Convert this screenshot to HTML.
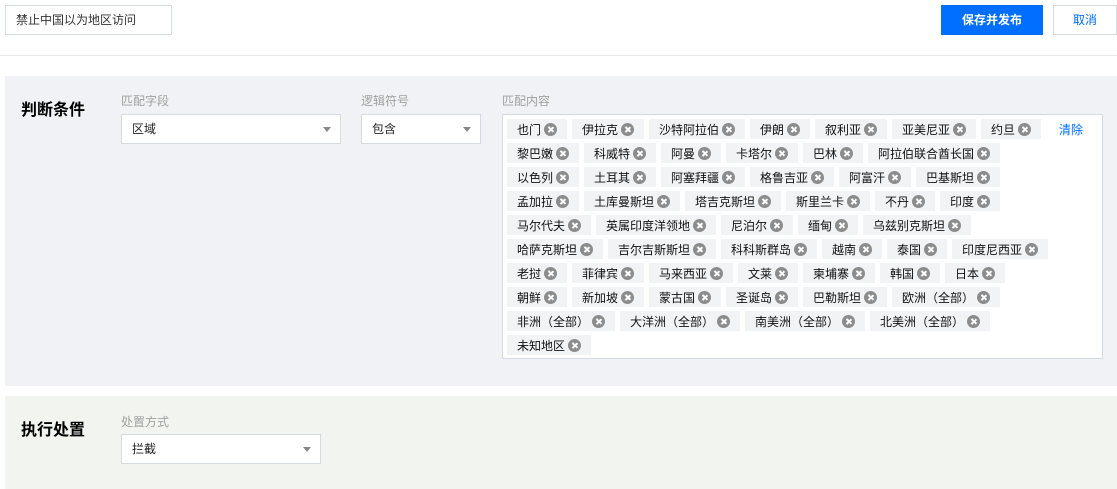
<!DOCTYPE html>
<html><head><meta charset="utf-8"><style>
*{box-sizing:border-box;margin:0;padding:0}
body{width:1117px;height:489px;background:#fff;font-family:"Liberation Sans","Noto Sans CJK SC",sans-serif;font-size:12px;color:#222;position:relative;overflow:hidden}
.abs{position:absolute}
.inp{left:5px;top:5px;width:167px;height:30px;border:1px solid #d9dde4;padding-left:10px;line-height:28px;color:#333}
.btn{top:5px;height:30px;line-height:30px;text-align:center}
.line{left:0;top:55px;width:1117px;height:1px;background:#e3e6eb}
.s1{left:5px;top:76px;width:1112px;height:310px;background:#f0f2f6}
.s2{left:5px;top:396px;width:1112px;height:93px;background:#f2f5ef}
.title{font-size:16px;font-weight:bold;color:#000}
.lbl{color:#a0a0a0;font-size:12px}
.sel{background:#fff;border:1px solid #d5d9e0;height:30px;line-height:28px;padding-left:10px;color:#222}
.sel:after{content:"";position:absolute;right:9px;top:12px;border-left:4px solid transparent;border-right:4px solid transparent;border-top:5px solid #888}
.box{left:502px;top:114px;width:601px;height:245px;background:#fff;border:1px solid #d5d9e0}
.rows{position:absolute;left:4px;top:4px}
.row{height:24px;display:flex}
.tag{height:20px;background:#f2f3f5;margin-right:5px;padding-left:10px;display:flex;align-items:center;white-space:nowrap;color:#111}
.x{width:13px;height:13px;border-radius:50%;background:#8c8c8c;margin-left:3px;position:relative;flex:none}
.x:before,.x:after{content:"";position:absolute;left:6px;top:3px;width:1.6px;height:7px;background:#fff;transform:rotate(45deg)}
.x:after{transform:rotate(-45deg)}
</style></head><body>
<div class="abs inp">禁止中国以为地区访问</div>
<div class="abs btn" style="left:941px;width:102px;background:#006eff;color:#fff;font-weight:bold">保存并发布</div>
<div class="abs btn" style="left:1053px;width:64px;border:1px solid #d5d9e0;color:#006eff;line-height:28px">取消</div>
<div class="abs line"></div>
<div class="abs s1"></div>
<div class="abs s2"></div>
<div class="abs title" style="left:21px;top:96px">判断条件</div>
<div class="abs lbl" style="left:121px;top:92px">匹配字段</div>
<div class="abs lbl" style="left:361px;top:92px">逻辑符号</div>
<div class="abs lbl" style="left:502px;top:92px">匹配内容</div>
<div class="abs sel" style="left:121px;top:114px;width:220px">区域</div>
<div class="abs sel" style="left:361px;top:114px;width:120px">包含</div>
<div class="abs box">
<div class="rows" id="r"></div>
<div class="abs" style="left:556px;top:6px;color:#006eff">清除</div>
</div>
<div class="abs title" style="left:21px;top:416px">执行处置</div>
<div class="abs lbl" style="left:121px;top:413px">处置方式</div>
<div class="abs sel" style="left:121px;top:434px;width:200px">拦截</div>
<script>
var rows=[["也门","伊拉克","沙特阿拉伯","伊朗","叙利亚","亚美尼亚","约旦"],
["黎巴嫩","科威特","阿曼","卡塔尔","巴林","阿拉伯联合酋长国"],
["以色列","土耳其","阿塞拜疆","格鲁吉亚","阿富汗","巴基斯坦"],
["孟加拉","土库曼斯坦","塔吉克斯坦","斯里兰卡","不丹","印度"],
["马尔代夫","英属印度洋领地","尼泊尔","缅甸","乌兹别克斯坦"],
["哈萨克斯坦","吉尔吉斯斯坦","科科斯群岛","越南","泰国","印度尼西亚"],
["老挝","菲律宾","马来西亚","文莱","柬埔寨","韩国","日本"],
["朝鲜","新加坡","蒙古国","圣诞岛","巴勒斯坦","欧洲（全部）"],
["非洲（全部）","大洋洲（全部）","南美洲（全部）","北美洲（全部）"],
["未知地区"]];
var h="";rows.forEach(function(r){h+='<div class="row">';r.forEach(function(t){var w=12*t.length+36;h+='<div class="tag" style="width:'+w+'px"><span style="width:'+(12*t.length)+'px;flex:none">'+t+'</span><span class="x"></span></div>';});h+='</div>';});
document.getElementById("r").innerHTML=h;
</script>
</body></html>
